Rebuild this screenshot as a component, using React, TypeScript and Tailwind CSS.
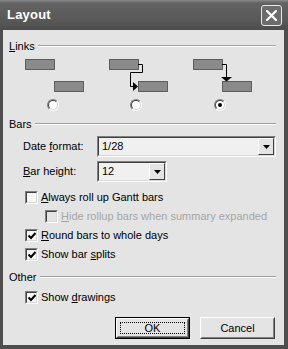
import React from 'react'

const font = { fontFamily: '"Liberation Sans", Arial, sans-serif' }

function Group({ label, mnemonic }: { label: string; mnemonic?: number }) {
  return (
    <div className="flex items-center h-[14px] pl-[6px] pr-[8px]">
      <span>
        {mnemonic === 0 ? (
          <>
            <u>{label[0]}</u>
            {label.slice(1)}
          </>
        ) : (
          label
        )}
      </span>
      <div className="flex-1 ml-[3px] border-t border-t-[#a0a0a0] border-b border-b-white" />
    </div>
  )
}

function Radio({ checked }: { checked?: boolean }) {
  return (
    <div className="w-[12px] h-[12px] rounded-full border border-t-[#808080] border-l-[#808080] border-b-white border-r-white">
      <div className="w-full h-full rounded-full border border-t-[#404040] border-l-[#404040] border-b-[#d8d8d8] border-r-[#d8d8d8] bg-white flex items-center justify-center">
        {checked && <div className="w-[4px] h-[4px] rounded-full bg-black" />}
      </div>
    </div>
  )
}

function Check({ checked, disabled }: { checked?: boolean; disabled?: boolean }) {
  return (
    <div className="w-[13px] h-[13px] shrink-0 border border-t-[#808080] border-l-[#808080] border-b-white border-r-white">
      <div
        className={`w-full h-full border border-t-[#404040] border-l-[#404040] border-b-[#d8d8d8] border-r-[#d8d8d8] flex items-center justify-center ${disabled ? 'bg-[#e4e4e4]' : 'bg-[#f6f6f6]'}`}
      >
        {checked && (
          <svg width="8" height="8" viewBox="0 0 8 8">
            <path d="M0.5 3.5 L3 6 L7.5 1" stroke="black" strokeWidth="2" fill="none" />
          </svg>
        )}
      </div>
    </div>
  )
}

function Combo({ value, width }: { value: string; width: string }) {
  return (
    <div className={`${width} h-[21px] border border-t-[#808080] border-l-[#808080] border-b-white border-r-white`}>
      <div className="h-full flex items-center border border-t-[#404040] border-l-[#404040] border-b-[#d8d8d8] border-r-[#d8d8d8] bg-[#f0f0f0]">
        <span className="flex-1 pl-[3px]">{value}</span>
        <div className="w-[16px] h-[17px] border border-t-white border-l-white border-b-[#404040] border-r-[#404040] bg-[#e4e4e4] flex items-center justify-center">
          <svg width="7" height="4" viewBox="0 0 7 4">
            <path d="M0 0 H7 L3.5 4 Z" fill="black" />
          </svg>
        </div>
      </div>
    </div>
  )
}

function CheckRow({
  pre,
  u,
  post,
  checked,
  disabled,
  indent,
}: {
  pre: string
  u: string
  post: string
  checked?: boolean
  disabled?: boolean
  indent: string
}) {
  return (
    <div className={`flex items-center h-[19px] gap-[3px] ${indent}`}>
      <Check checked={checked} disabled={disabled} />
      <span className={disabled ? 'text-[#a4a4a4]' : ''}>
        {pre}
        <u>{u}</u>
        {post}
      </span>
    </div>
  )
}

function Button({ label, isDefault }: { label: string; isDefault?: boolean }) {
  return (
    <div className={`w-[75px] h-[22px] ${isDefault ? 'border border-black' : ''}`}>
      <div className="w-full h-full border border-t-white border-l-white border-b-[#404040] border-r-[#404040] bg-[#e4e4e4]">
        <div className="w-full h-full border border-t-[#e4e4e4] border-l-[#e4e4e4] border-b-[#808080] border-r-[#808080] p-[2px]">
          <div
            className={`w-full h-full flex items-center justify-center ${isDefault ? 'border border-dotted border-black' : ''}`}
          >
            {label}
          </div>
        </div>
      </div>
    </div>
  )
}

export default function App() {
  return (
    <div className="w-[288px] h-[349px] bg-[#4e4e4e] flex flex-col text-[11px] text-black" style={font}>
      {/* title bar */}
      <div className="h-[30px] shrink-0 flex items-center pl-[7px] pr-[6px] bg-[linear-gradient(180deg,#8a8a8a_0px,#626262_3px,#595959_20px,#4c4c4c_30px)]">
        <span className="flex-1 text-white font-bold text-[13px] tracking-[0.2px]">Layout</span>
        <div className="w-[21px] h-[21px] rounded-[3px] border border-[#e8e8e8] bg-[#6c6c6c] flex items-center justify-center">
          <svg width="11" height="11" viewBox="0 0 11 11">
            <path d="M1 1 L10 10 M10 1 L1 10" stroke="white" strokeWidth="2.2" strokeLinecap="square" />
          </svg>
        </div>
      </div>

      {/* body */}
      <div className="flex-1 ml-[3px] mr-[4px] mb-[4px] bg-[#e4e4e4] flex flex-col">
        <div className="mt-[9px]">
          <Group label="Links" mnemonic={0} />
        </div>

        <svg width="281" height="40" className="mt-[2px] shrink-0" viewBox="0 0 281 40">
          <g fill="#8a8a8a" stroke="black" strokeDasharray="1 1">
            <rect x="22.5" y="4.5" width="29" height="10" />
            <rect x="51.5" y="26.5" width="29" height="10" />
            <rect x="106.5" y="4.5" width="29" height="10" />
            <rect x="135.5" y="26.5" width="29" height="10" />
            <rect x="190.5" y="4.5" width="29" height="10" />
            <rect x="219.5" y="26.5" width="29" height="10" />
          </g>
          <path d="M135 9.5 H139.5 V17.5 H127.5 V31.5 H131" stroke="black" fill="none" />
          <path d="M130 27 L135 31.5 L130 36 Z" fill="black" />
          <path d="M219 9.5 H223.5 V22" stroke="black" fill="none" />
          <path d="M218 22 H229 L223.5 26.5 Z" fill="black" />
        </svg>

        <div className="flex mt-[4px] pl-[44px]">
          <Radio />
          <div className="ml-[71px]">
            <Radio />
          </div>
          <div className="ml-[72px]">
            <Radio checked />
          </div>
        </div>

        <div className="mt-[6px]">
          <Group label="Bars" />
        </div>

        <div className="flex items-center mt-[5px] pl-[20px]">
          <span className="w-[74px]">
            Date <u>f</u>ormat:
          </span>
          <Combo value="1/28" width="w-[179px]" />
        </div>
        <div className="flex items-center mt-[4px] pl-[20px]">
          <span className="w-[74px]">
            <u>B</u>ar height:
          </span>
          <Combo value="12" width="w-[70px]" />
        </div>

        <div className="mt-[6px] flex flex-col">
          <CheckRow indent="pl-[22px]" pre="" u="A" post="lways roll up Gantt bars" />
          <CheckRow indent="pl-[42px]" pre="" u="H" post="ide rollup bars when summary expanded" disabled />
          <CheckRow indent="pl-[22px]" pre="" u="R" post="ound bars to whole days" checked />
          <CheckRow indent="pl-[22px]" pre="Show bar " u="s" post="plits" checked />
        </div>

        <div className="mt-[6px]">
          <Group label="Other" />
        </div>
        <div className="mt-[4px]">
          <CheckRow indent="pl-[22px]" pre="Show " u="d" post="rawings" checked />
        </div>

        <div className="flex justify-end gap-[10px] mt-[10px] pr-[9px]">
          <Button label="OK" isDefault />
          <Button label="Cancel" />
        </div>
      </div>
    </div>
  )
}
